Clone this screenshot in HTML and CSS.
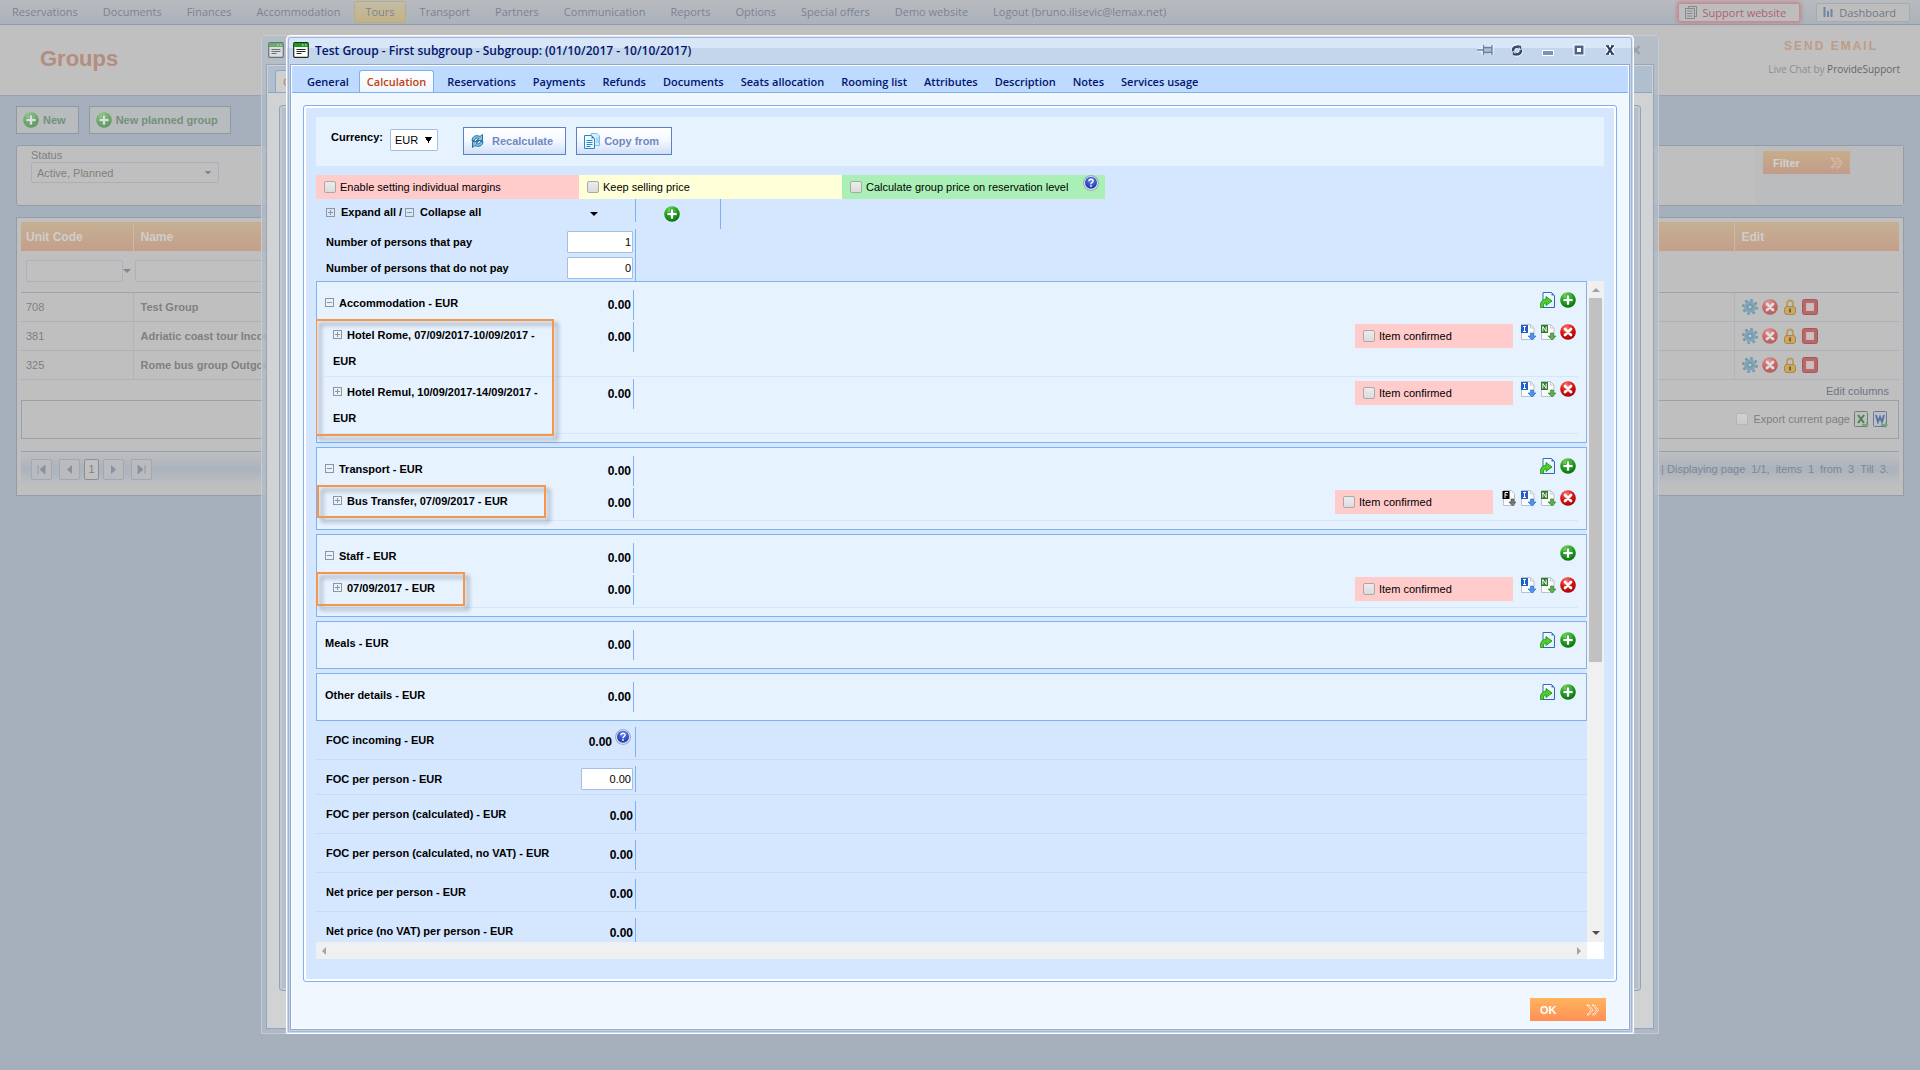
FILE: index.html
```html
<!DOCTYPE html>
<html lang="en">
<head>
<meta charset="utf-8">
<title>Groups</title>
<link rel="stylesheet" href="styles.css">
</head>
<body>
<svg class="defs" aria-hidden="true">
  <defs>
    <radialGradient id="g-green" cx="40%" cy="25%" r="80%"><stop offset="0" stop-color="#7fe05a"/><stop offset=".5" stop-color="#22a31f"/><stop offset="1" stop-color="#036b06"/></radialGradient>
    <radialGradient id="g-red" cx="40%" cy="25%" r="80%"><stop offset="0" stop-color="#ff7a70"/><stop offset=".5" stop-color="#dd1414"/><stop offset="1" stop-color="#9c0000"/></radialGradient>
    <radialGradient id="g-blue" cx="50%" cy="30%" r="70%"><stop offset="0" stop-color="#5d87f0"/><stop offset="1" stop-color="#1a2fae"/></radialGradient>
    <linearGradient id="g-page" x1="0" y1="0" x2="1" y2="1"><stop offset="0" stop-color="#ffffff"/><stop offset="1" stop-color="#dfeaf5"/></linearGradient>
    <symbol id="plus" viewBox="0 0 16 16"><circle cx="8" cy="8" r="7.8" fill="url(#g-green)"/><path d="M6.5 3h3v3.500H13v3H9.500V13h-3V9.500H3v-3h3.500z" fill="#fff" stroke="#0c7a10" stroke-width=".6"/></symbol>
    <symbol id="cross" viewBox="0 0 16 16"><circle cx="8" cy="8" r="7.800" fill="url(#g-red)"/><path d="M5 5l6 6M11 5l-6 6" stroke="#fff" stroke-width="2.800" stroke-linecap="round"/></symbol>
    <symbol id="help" viewBox="0 0 16 16"><circle cx="8" cy="8" r="7.800" fill="#8c98b4"/><circle cx="8" cy="8" r="7" fill="#dfe5f2"/><circle cx="8" cy="7.800" r="6" fill="url(#g-blue)"/><path d="M6 6.200c0-2.800 4.200-2.600 4.100-.200C10 7.500 8 7.500 8 9.200" fill="none" stroke="#fff" stroke-width="1.500"/><rect x="7.200" y="10.200" width="1.600" height="1.600" fill="#fff"/></symbol>
    <symbol id="import" viewBox="0 0 16 16"><path d="M3 .5h8.500l3 3v12H3z" fill="url(#g-page)" stroke="#2b6cb8"/><path d="M11.500.5v3h3z" fill="#2f7fd6"/><path d="M.5 15.500C0 10 2 7.500 6 7.200V4.500l6 4.500-6 4.500V11c-2 0-2.500 1-2.500 4.500z" fill="#4ccc2e" stroke="#168a12" stroke-width=".8"/></symbol>
    <symbol id="page-i" viewBox="0 0 16 16"><path d="M1.500.5h9l3.500 3.500v11.500H1.500z" fill="#fbfbfb" stroke="#b9c1ca"/><path d="M10.500.5v3.500H14" fill="none" stroke="#c4ccd5"/><rect x="1" y="1" width="7" height="8" fill="#1f5fc6"/><path d="M3 2.500h3M4.500 2.500v5M3 7.500h3" stroke="#fff" fill="none"/><path d="M10.500 9h3v3H16l-4 4-4-4h2.500z" fill="#4a93f5" stroke="#2466c2" stroke-width=".6"/></symbol>
    <symbol id="page-n" viewBox="0 0 16 16"><path d="M1.500.5h9l3.500 3.500v11.500H1.500z" fill="#fbfbfb" stroke="#b9c1ca"/><path d="M10.500.5v3.500H14" fill="none" stroke="#c4ccd5"/><rect x="1" y="1" width="7" height="8" fill="#2e7a2a"/><path d="M2.800 7.500v-5l3.400 5v-5" stroke="#fff" fill="none"/><path d="M10.500 9h3v3H16l-4 4-4-4h2.500z" fill="#59b048" stroke="#2d7d27" stroke-width=".6"/></symbol>
    <symbol id="page-f" viewBox="0 0 16 16"><path d="M3.500.5h8l3 3.500v11.500h-11z" fill="#fbfbfb" stroke="#b9c1ca"/><rect x="2.500" y="1" width="7" height="8" fill="#000"/><path d="M5 8V2.500h3M5 5h2.500" stroke="#fff" fill="none"/><path d="M11 9h3v3h2l-3.500 4L9 12h2z" fill="#777" stroke="#444" stroke-width=".6"/></symbol>
    <symbol id="expand" viewBox="0 0 9 9"><rect x=".5" y=".5" width="8" height="8" fill="none" stroke="#8f959c"/><path d="M2 4.500h5M4.500 2v5" stroke="#8f959c"/></symbol>
    <symbol id="collapse" viewBox="0 0 9 9"><rect x=".5" y=".5" width="8" height="8" fill="none" stroke="#8f959c"/><path d="M2 4.500h5" stroke="#8f959c"/></symbol>
    <symbol id="sheet" viewBox="0 0 16 16"><rect x=".7" y=".7" width="14.600" height="14.600" rx="1" fill="#fff" stroke="#222b22" stroke-width="1.200"/><rect x="1" y="1" width="14" height="4" fill="#1c9a1c"/><path d="M9 3h1.500M12 3h1.500" stroke="#fff"/><path d="M3.500 7.500h9M3.500 9.500h9M3.500 11.500h5" stroke="#222"/></symbol>
    <symbol id="chevrons" viewBox="0 0 14 12"><path d="M1 1h2l4 5-4 5H1l4-5zM6.500 1h2l4 5-4 5h-2l4-5z" fill="none" stroke="#fff" stroke-dasharray="1.500 .5"/></symbol>
    <symbol id="gear" viewBox="0 0 16 16"><circle cx="8" cy="8" r="6.800" fill="none" stroke="#6f98ac" stroke-width="2.400" stroke-dasharray="2.700 2.640"/><circle cx="8" cy="8" r="5.800" fill="#7fa5b8"/><circle cx="8" cy="8" r="2.200" fill="#bfc3c5" stroke="#5f8799"/></symbol>
    <symbol id="lock" viewBox="0 0 16 16"><path d="M5 8V4.500c0-4 6-4 6 0V8" fill="none" stroke="#b99a5c" stroke-width="1.800"/><rect x="2.500" y="7.500" width="11" height="8" rx="2.500" fill="#cda862" stroke="#a8884c"/><path d="M8 9.500v4" stroke="#7d6238" stroke-width="2"/></symbol>
    <symbol id="stop" viewBox="0 0 16 16"><rect x=".5" y=".5" width="15" height="15" rx="2" fill="#b8686b" stroke="#a2585c"/><rect x="4.500" y="4.500" width="7" height="7" fill="#c6c2c2" stroke="#d3b5b5"/></symbol>
  </defs>
</svg>

<div class="page">
  <nav class="menu">
    <a href="#">Reservations</a><a href="#">Documents</a><a href="#">Finances</a><a href="#">Accommodation</a><a href="#" class="current">Tours</a><a href="#">Transport</a><a href="#">Partners</a><a href="#">Communication</a><a href="#">Reports</a><a href="#">Options</a><a href="#">Special offers</a><a href="#">Demo website</a><a href="#">Logout (bruno.ilisevic@lemax.net)</a>
    <div class="menu-buttons">
      <button class="support"><svg width="12" height="13" viewBox="0 0 12 13"><path d="M3.500 2.500V.5h8v10h-2M.5 2.500h9v10h-9zM2 5h5.500M2 7.500h5.500M2 10h5.500" fill="none" stroke="#85878a"/></svg>Support website</button>
      <button class="dashboard"><svg width="10" height="10" viewBox="0 0 10 10"><path d="M1.500 0v10M5 4v6M8.500 2v8" stroke="#6f86a5" stroke-width="2"/></svg>Dashboard</button>
    </div>
  </nav>
  <header class="head">
    <h1>Groups</h1>
    <div class="contact"><a href="#" class="send">SEND EMAIL</a><span class="chat">Live Chat by <a href="#">ProvideSupport</a></span></div>
  </header>
  <main class="content">
    <div class="new-buttons">
      <button><svg width="16" height="16"><use href="#plus"/></svg>New</button>
      <button><svg width="16" height="16"><use href="#plus"/></svg>New planned group</button>
    </div>
    <section class="filter">
      <div class="status"><label for="status">Status</label><select id="status"><option>Active, Planned</option></select></div>
      <div class="filter-side"><button class="orange">Filter<svg width="14" height="12"><use href="#chevrons"/></svg></button></div>
    </section>
    <section class="grid-panel">
      <table class="groups">
        <colgroup><col class="c-code"><col><col class="c-edit"></colgroup>
        <thead>
          <tr><th>Unit Code</th><th>Name</th><th>Edit</th></tr>
          <tr class="filters"><td><div class="combo"><input aria-label="Unit code filter"><i class="caret"></i></div></td><td><input class="name-filter" aria-label="Name filter"></td><td></td></tr>
        </thead>
        <tbody>
          <tr><td>708</td><td class="name">Test Group</td><td><div class="row-icons"><svg><use href="#gear"/></svg><svg class="dim"><use href="#cross"/></svg><svg><use href="#lock"/></svg><svg><use href="#stop"/></svg></div></td></tr>
          <tr><td>381</td><td class="name">Adriatic coast tour Incoming</td><td><div class="row-icons"><svg><use href="#gear"/></svg><svg class="dim"><use href="#cross"/></svg><svg><use href="#lock"/></svg><svg><use href="#stop"/></svg></div></td></tr>
          <tr><td>325</td><td class="name">Rome bus group Outgoing</td><td><div class="row-icons"><svg><use href="#gear"/></svg><svg class="dim"><use href="#cross"/></svg><svg><use href="#lock"/></svg><svg><use href="#stop"/></svg></div></td></tr>
        </tbody>
      </table>
      <a href="#" class="edit-columns">Edit columns</a>
      <div class="export">
        <label><input type="checkbox">Export current page</label>
        <svg width="15" height="17" viewBox="0 0 15 17"><rect x=".5" y=".5" width="13" height="15" rx="1" fill="#b9c2b9" stroke="#6f7f75"/><path d="M4 4l6 8M10 4l-6 8" stroke="#4f7d58" stroke-width="2"/><path d="M8 13h4v-2l3 3-3 3v-2H8z" fill="#72a877"/></svg>
        <svg width="15" height="17" viewBox="0 0 15 17"><rect x=".5" y=".5" width="13" height="15" rx="1" fill="#b9c0c9" stroke="#6f7a8a"/><path d="M3 4l2 7 2-5 2 5 2-7" stroke="#5570a0" stroke-width="1.800" fill="none"/><path d="M8 13h4v-2l3 3-3 3v-2H8z" fill="#72a877"/></svg>
      </div>
      <div class="pager">
        <button class="first" aria-label="First page"><svg width="9" height="9" viewBox="0 0 9 9"><path d="M1 0v9M8 0v9L3 4.500z" fill="#8891a0" stroke="#8891a0" stroke-width=".8"/></svg></button>
        <button aria-label="Previous page"><svg width="9" height="9" viewBox="0 0 9 9"><path d="M7 0v9L2 4.500z" fill="#8891a0"/></svg></button>
        <button class="num">1</button>
        <button aria-label="Next page"><svg width="9" height="9" viewBox="0 0 9 9"><path d="M2 0v9l5-4.500z" fill="#8891a0"/></svg></button>
        <button class="last" aria-label="Last page"><svg width="9" height="9" viewBox="0 0 9 9"><path d="M1 0v9l5-4.500zM8 0v9" fill="#8891a0" stroke="#8891a0" stroke-width=".8"/></svg></button>
        <p class="pager-info"><span>| Displaying page</span><span>1/1,</span><span>items</span><span>1</span><span>from</span><span>3</span><span>Till</span><span>3.</span></p>
      </div>
    </section>
  </main>
</div>

<div class="window back" aria-hidden="true">
  <div class="title-bar"><svg width="16" height="16"><use href="#sheet"/></svg><span class="back-x"><svg width="10" height="10" viewBox="0 0 10 10"><path d="M1.500 1l7 8M8.500 1l-7 8" stroke="#7d8288" stroke-width="2"/></svg></span></div>
  <div class="window-body"><div class="tabs"><span class="tab selected">General</span></div><div class="panel"></div></div>
</div>

<div class="window front" role="dialog" aria-labelledby="win-title">
  <div class="title-bar">
    <svg width="16" height="16"><use href="#sheet"/></svg>
    <h2 id="win-title">Test Group - First subgroup - Subgroup: (01/10/2017 - 10/10/2017)</h2>
    <div class="win-buttons">
      <button aria-label="Pin"><svg width="17" height="12" viewBox="0 0 17 12"><path d="M0 6h6M6 1v10M6 3.500c3 1 5 1 9 0M6 8.500c3-1 5-1 9 0M15 1v10" fill="none" stroke="#fff" stroke-width="3"/><path d="M6 3.500h9v5H6z" fill="#a9bcd8"/><path d="M0 6h6M6.500 1v10M7 3.500h8M7 8.500h8M15 1v10" fill="none" stroke="#6680a8" stroke-width="1.400"/></svg></button>
      <button aria-label="Reload"><svg width="12" height="11" viewBox="0 0 13 12"><path d="M2.500 6a4 4 0 0 1 6-3.500M10.500 6a4 4 0 0 1-6 3.500" stroke="#fff" stroke-width="5" fill="none"/><path d="M2.500 6.500a4 3.500 0 0 1 6-4M10.500 5.500a4 3.500 0 0 1-6 4" fill="none" stroke="#38496b" stroke-width="2.800"/><path d="M6.500 0L11 1v4zM6.500 12L2 11V7z" fill="#38496b"/></svg></button>
      <button aria-label="Minimize"><svg width="12" height="12" viewBox="0 0 12 12"><rect x=".5" y="6.500" width="11" height="5" fill="#7b92b8" stroke="#fff"/></svg></button>
      <button aria-label="Maximize"><svg width="12" height="12" viewBox="0 0 12 12"><rect x="1" y="1" width="10" height="10" fill="#4d638c" stroke="#fff"/><rect x="4" y="4" width="4" height="4" fill="#fff"/></svg></button>
      <button aria-label="Close"><svg width="12" height="12" viewBox="0 0 12 12"><path d="M3 1.500l6 9M9 1.500l-6 9" stroke="#fff" stroke-width="4.500"/><path d="M3.500 2l5 8M8.500 2l-5 8" stroke="#2c3d5e" stroke-width="2.200"/><path d="M2 2h3M7 2h3M2 10h3M7 10h3" stroke="#2c3d5e" stroke-width="1.400"/></svg></button>
    </div>
  </div>
  <div class="window-body">
    <nav class="tabs">
      <a href="#" class="tab">General</a><a href="#" class="tab selected">Calculation</a><a href="#" class="tab">Reservations</a><a href="#" class="tab">Payments</a><a href="#" class="tab">Refunds</a><a href="#" class="tab">Documents</a><a href="#" class="tab">Seats allocation</a><a href="#" class="tab">Rooming list</a><a href="#" class="tab">Attributes</a><a href="#" class="tab">Description</a><a href="#" class="tab">Notes</a><a href="#" class="tab">Services usage</a>
    </nav>
    <div class="panel">
      <div class="toolbar">
        <label for="currency">Currency:</label>
        <select id="currency"><option>EUR</option></select>
        <button class="tool recalc"><svg width="13" height="14" viewBox="0 0 13 14"><path d="M1 6.500C1 2 6 .5 9 2.500L11.500.5v6h-6L8 4.500c-2-1.200-4.500 0-4.500 2zM12 7.500c0 4.500-5 6-8 4L1.500 13.500v-6h6L5 9.500c2 1.200 4.500 0 4.500-2z" fill="#7cc0ee" stroke="#1d6290" stroke-width=".9"/></svg>Recalculate</button>
        <button class="tool copy"><svg width="16" height="16" viewBox="0 0 16 16"><path d="M7 .5h6l2.500 2.500v9.500H7z" fill="#d8eefb" stroke="#7cc0ea"/><path d="M12 5h3M12 7h3M12 9h3" stroke="#7cc0ea"/><path d="M.5 2.500h7l3 3v10H.5z" fill="#eef8ff" stroke="#2a84cc"/><path d="M7.500 2.500v3h3z" fill="#2a84cc"/><path d="M2.500 7.500h6M2.500 9.500h6M2.500 11.500h6M2.500 13.500h4" stroke="#2a84cc"/></svg>Copy from</button>
      </div>
      <div class="options">
        <label class="option pink"><input type="checkbox">Enable setting individual margins</label>
        <label class="option yellow"><input type="checkbox">Keep selling price</label>
        <div class="option green"><label><input type="checkbox">Calculate group price on reservation level</label><svg width="16" height="16"><use href="#help"/></svg></div>
      </div>
      <div class="persons">
        <div class="expand-row">
          <p><svg width="9" height="9"><use href="#expand"/></svg><a href="#">Expand all</a><span>/</span><svg width="9" height="9"><use href="#collapse"/></svg><a href="#">Collapse all</a></p>
          <div class="menu-cell"><i class="caret black"></i></div>
          <div class="add-cell"><svg width="16" height="16"><use href="#plus"/></svg></div>
        </div>
        <div class="person-row"><label for="pay">Number of persons that pay</label><div class="person-value"><input id="pay" value="1"></div></div>
        <div class="person-row"><label for="nopay">Number of persons that do not pay</label><div class="person-value"><input id="nopay" value="0"></div></div>
      </div>

      <div class="scroller">
        <div class="list">
          <section class="group">
            <div class="row"><div class="label"><svg width="9" height="9"><use href="#collapse"/></svg>Accommodation - EUR</div><div class="value">0.00</div><div class="actions"><svg><use href="#import"/></svg><svg><use href="#plus"/></svg></div></div>
            <div class="children marked mark-two">
              <div class="row child"><div class="label"><svg width="9" height="9"><use href="#expand"/></svg>Hotel Rome, 07/09/2017-10/09/2017 - EUR</div><div class="value">0.00</div><div class="actions"><label class="confirm"><input type="checkbox">Item confirmed</label><svg><use href="#page-i"/></svg><svg><use href="#page-n"/></svg><svg><use href="#cross"/></svg></div></div>
              <div class="row child"><div class="label"><svg width="9" height="9"><use href="#expand"/></svg>Hotel Remul, 10/09/2017-14/09/2017 - EUR</div><div class="value">0.00</div><div class="actions"><label class="confirm"><input type="checkbox">Item confirmed</label><svg><use href="#page-i"/></svg><svg><use href="#page-n"/></svg><svg><use href="#cross"/></svg></div></div>
            </div>
          </section>
          <section class="group">
            <div class="row"><div class="label"><svg width="9" height="9"><use href="#collapse"/></svg>Transport - EUR</div><div class="value">0.00</div><div class="actions"><svg><use href="#import"/></svg><svg><use href="#plus"/></svg></div></div>
            <div class="children marked mark-bus">
              <div class="row child"><div class="label"><svg width="9" height="9"><use href="#expand"/></svg>Bus Transfer, 07/09/2017 - EUR</div><div class="value">0.00</div><div class="actions"><label class="confirm"><input type="checkbox">Item confirmed</label><svg><use href="#page-f"/></svg><svg><use href="#page-i"/></svg><svg><use href="#page-n"/></svg><svg><use href="#cross"/></svg></div></div>
            </div>
          </section>
          <section class="group">
            <div class="row"><div class="label"><svg width="9" height="9"><use href="#collapse"/></svg>Staff - EUR</div><div class="value">0.00</div><div class="actions"><svg><use href="#plus"/></svg></div></div>
            <div class="children marked mark-staff">
              <div class="row child"><div class="label"><svg width="9" height="9"><use href="#expand"/></svg>07/09/2017 - EUR</div><div class="value">0.00</div><div class="actions"><label class="confirm"><input type="checkbox">Item confirmed</label><svg><use href="#page-i"/></svg><svg><use href="#page-n"/></svg><svg><use href="#cross"/></svg></div></div>
            </div>
          </section>
          <section class="group">
            <div class="row"><div class="label">Meals - EUR</div><div class="value">0.00</div><div class="actions"><svg><use href="#import"/></svg><svg><use href="#plus"/></svg></div></div>
          </section>
          <section class="group">
            <div class="row"><div class="label">Other details - EUR</div><div class="value">0.00</div><div class="actions"><svg><use href="#import"/></svg><svg><use href="#plus"/></svg></div></div>
          </section>
          <div class="sum"><div class="label">FOC incoming - EUR</div><div class="value">0.00<svg width="16" height="16"><use href="#help"/></svg></div></div>
          <div class="sum"><label class="label" for="foc">FOC per person - EUR</label><div class="value edit"><input id="foc" value="0.00"></div></div>
          <div class="sum"><div class="label">FOC per person (calculated) - EUR</div><div class="value">0.00</div></div>
          <div class="sum"><div class="label">FOC per person (calculated, no VAT) - EUR</div><div class="value">0.00</div></div>
          <div class="sum"><div class="label">Net price per person - EUR</div><div class="value">0.00</div></div>
          <div class="sum"><div class="label">Net price (no VAT) per person - EUR</div><div class="value">0.00</div></div>
        </div>
        <div class="vbar" aria-hidden="true"><i class="arrow up"></i><div class="track"><div class="thumb"></div></div><i class="arrow down"></i></div>
        <div class="hbar" aria-hidden="true"><i class="arrow left"></i><i class="arrow right"></i></div>
      </div>
    </div>
    <div class="footer"><button class="orange ok">OK<svg width="14" height="12"><use href="#chevrons"/></svg></button></div>
  </div>
</div>
</body>
</html>
```
FILE: styles.css
```css
*, *::before, *::after { box-sizing: border-box; }
html, body { height: 100%; margin: 0; }
body {
  position: relative;
  overflow: hidden;
  background: #a6b0bd;
  font: 11px "Liberation Sans", Arial, sans-serif;
  color: #000;
}
a { color: inherit; text-decoration: none; }
button, input, select { font: inherit; color: inherit; margin: 0; }
h1, h2, p { margin: 0; }
svg { display: block; flex: none; overflow: visible; }
.defs { position: absolute; width: 0; height: 0; }

input[type="checkbox"] {
  appearance: none;
  flex: none;
  width: 12px;
  height: 12px;
  border: 1px solid #a9a9a9;
  border-radius: 2px;
  background: linear-gradient(#ececec, #dcdcdc);
}
.caret {
  border: 4px solid transparent;
  border-top-color: #7e8794;
  border-bottom: 0;
}
.caret.black { border-top-color: #000; }

/* Page behind the windows */
.page { color: #808080; }
.menu {
  display: flex;
  align-items: center;
  height: 25px;
  padding: 0 10px 0 0;
  border-bottom: 1px solid #8f9cad;
  background: linear-gradient(#b8bbbf, #abb2bb);
  font: 11px "Open Sans", sans-serif;
  color: #7e8290;
}
.menu a { padding: 0 13px 0 12px; line-height: 20px; white-space: nowrap; }
.menu .current {
  margin: 0 2px 0 1px;
  padding: 0 10px;
  border: 1px solid #b5ab8e;
  border-radius: 2px;
  background: linear-gradient(#c4bda5, #c2b385);
}
.menu-buttons { display: flex; gap: 16px; margin-left: auto; }
.menu button {
  display: flex;
  align-items: center;
  gap: 6px;
  height: 19px;
  padding: 0 13px 0 6px;
  border: 1px solid #a6abb0;
  border-radius: 2px;
  background: #bdbdbd;
  color: #6f7a88;
}
.menu .support { color: #b2606f; border-color: #c58d92; box-shadow: 0 0 4px 1px #c0838a; }
.head {
  display: flex;
  justify-content: space-between;
  height: 71px;
  padding: 0 20px 0 40px;
  border-bottom: 1px solid #98a2af;
  background: #c0c0c0;
}
.head h1 { font-size: 22px; line-height: 68px; color: #b38d7f; }
.contact { display: flex; flex-direction: column; align-items: flex-end; padding-top: 12px; }
.send { padding-right: 22px; font-weight: bold; font-size: 12px; line-height: 18px; letter-spacing: 2px; color: #bf9c86; }
.chat { font: 10px/28px "Open Sans", sans-serif; color: #8e8e8e; }
.chat a { color: #666; }
.content { padding: 10px 16px; }
.new-buttons { display: flex; gap: 10px; }
.new-buttons button {
  display: flex;
  align-items: center;
  gap: 4px;
  height: 28px;
  padding: 0 12px 0 6px;
  border: 1px solid #8f98a3;
  background: #b9bcbf;
  font-weight: bold;
  color: #71917a;
}
.new-buttons svg, .dim { opacity: .5; }
.filter {
  display: flex;
  justify-content: space-between;
  height: 61px;
  margin-top: 11px;
  border: 1px solid #939da9;
  border-radius: 3px;
  background: #bfbfbf;
}
.status { display: flex; flex-direction: column; padding: 2px 14px; }
.status label { line-height: 14px; }
.status select {
  appearance: none;
  width: 188px;
  height: 21px;
  padding: 0 5px;
  border: 1px solid #aab0b8;
  border-radius: 2px;
  background:
    linear-gradient(135deg, #7e8794 50%, transparent 50%) 176px 8px / 3px 4px no-repeat,
    linear-gradient(225deg, #7e8794 50%, transparent 50%) 173px 8px / 3px 4px no-repeat,
    #bfbfbf;
}
.filter-side { width: 148px; padding: 5px 8px; background: #bbbcbe; }
.orange {
  display: flex;
  align-items: center;
  justify-content: space-between;
  width: 87px;
  height: 23px;
  padding: 0 6px 0 10px;
  border: 0;
  background: linear-gradient(#c7ad89, #c29c8b);
  font-weight: bold;
  color: #d2d2d2;
}
.filter-side svg { opacity: .4; }
.grid-panel {
  height: 279px;
  margin-top: 11px;
  padding: 4px;
  border: 1px solid #939da9;
  background: #bfbfbf;
}
.groups { width: 100%; table-layout: fixed; border-collapse: collapse; }
.c-code { width: 112px; }
.c-edit { width: 165px; }
.groups th {
  height: 29px;
  padding: 0 7px 0 5px;
  text-align: left;
  font-size: 12px;
  color: #d0cdca;
  border-left: 1px solid #c8bbb0;
}
.groups th:first-child, .groups td:first-child { border-left: 0; }
.groups thead tr:first-child { background: linear-gradient(#c6b092, #c39f8b); }
.groups td { height: 29px; padding: 0 7px 0 5px; border-bottom: 1px solid #adb0b4; border-left: 1px solid #b2b4b6; }
.groups th + th, .groups tbody td + td { padding-left: 7px; }
.groups .filters td { height: 41px; padding: 0 2px 0 5px; border-left: 0; border-bottom-color: #a0a4a9; }
.groups .filters td + td { padding-left: 2px; }
.groups input { width: 97px; height: 22px; border: 1px solid #aeb2b8; border-radius: 2px; background: #c0c0c0; }
.groups .name-filter { width: 240px; }
.combo { display: flex; align-items: center; }
.name { font-weight: bold; }
.row-icons { display: flex; gap: 4px; }
.row-icons svg { width: 16px; height: 16px; }
.edit-columns { display: block; padding-right: 10px; text-align: right; line-height: 17px; margin-top: 3px; color: #6d7683; }
.export {
  display: flex;
  align-items: center;
  justify-content: flex-end;
  gap: 4px;
  height: 39px;
  padding-right: 10px;
  border: 1px solid #9aa0a8;
}
.export label { display: flex; align-items: center; gap: 5px; }
.export input { opacity: .4; }
.pager {
  display: flex;
  align-items: center;
  gap: 4px;
  height: 36px;
  margin-top: 12px;
  padding: 0 10px;
  border-top: 1px solid #93a0b0;
  background: linear-gradient(#bdbebf, #acb3bd 50%, #bfbfbf 95%);
}
.pager button { display: grid; place-items: center; width: 21px; height: 21px; padding: 0; border: 1px solid #a2a8b0; border-radius: 2px; background: #b9bbbe; }
.pager .num { width: 15px; border-color: #8a9099; background: #c0c0c0; }
.pager .first { margin-right: 3px; }
.pager .last { margin-left: 3px; }
.pager-info { display: flex; gap: 6px; margin-left: auto; color: #7e8794; }

/* Windows */
.window {
  position: absolute;
  display: flex;
  flex-direction: column;
  top: 35px;
  bottom: 36px;
  border-radius: 4px 4px 0 0;
}
.back {
  left: 261px;
  right: 261px;
  padding: 0 4px 4px;
  border: 1px solid #c5cbd3;
  background: rgba(178, 187, 199, .8);
}
.front {
  left: 286px;
  right: 286px;
  padding: 0 2px 2px;
  border: 1px solid #fff;
  outline: 1px solid #a5b7d3;
  outline-offset: -3px;
  background: linear-gradient(#d8e6f7 12px, #c3d6ec 12px, #c3d6ec);
}
.title-bar { display: flex; align-items: center; height: 28px; flex: none; padding: 0 13px 0 4px; }
.back .title-bar { padding-left: 2px; justify-content: space-between; }
.back .title-bar svg { opacity: .5; }
.title-bar h2 { margin-left: 6px; font: 600 12px "Open Sans", sans-serif; color: #00156e; white-space: nowrap; }
.win-buttons { display: flex; gap: 14px; margin-left: auto; }
.win-buttons button { display: grid; place-items: center; width: 17px; height: 14px; padding: 0; border: 0; background: none; }
.window-body { display: flex; flex-direction: column; flex: 1; min-height: 0; border: 1px solid #8fa8cc; background: #f0f7ff; }
.front .window-body { margin: 0 1px 1px; box-shadow: inset 0 0 0 1px #fff; padding: 1px; }
.back .window-body { background: #d0d2d4; border-color: #97a4b5; padding: 1px; }
.tabs { display: flex; align-items: flex-end; flex: none; height: 27px; padding-left: 6px; border-bottom: 1px solid #7fb0ee; background: #bedaff; }
.tab { padding: 0 8px 0 9px; font: 600 11px/21px "Open Sans", sans-serif; color: #00156e; white-space: nowrap; }
.tab.selected { padding: 0 7px; margin: 0 4px 0 2px; border: 1px solid #7fb0ee; border-bottom: 0; border-radius: 3px 3px 0 0; background: linear-gradient(#fff, #eef5ff); color: #c0440c; }
.back .tabs { background: #b0bfd0; border-color: #8ea5c2; }
.back .tab.selected { margin-left: 1px; background: #cdcfd1; border-color: #8ea5c2; color: #b98b78; }
.panel {
  display: flex;
  flex-direction: column;
  flex: 1;
  min-height: 0;
  margin: 12px 11px 0;
  padding: 11px 12px 22px;
  border: 1px solid #7fb1f5;
  border-radius: 3px;
  box-shadow: inset 0 0 0 2px #fff;
  background: #d5e7ff;
}
.back .panel { margin-bottom: 36px; background: #b5bfca; border-color: #8ea5c2; box-shadow: inset 0 0 0 2px #c6c9cc; }

.toolbar { display: flex; flex: none; height: 49px; padding: 10px 15px; background: #e7f2ff; font-weight: bold; }
.toolbar label { line-height: 20px; }
.toolbar select {
  appearance: none;
  width: 48px;
  height: 22px;
  margin: 2px 25px 0 7px;
  padding: 0 4px;
  border: 1px solid #a3bfe5;
  border-radius: 1px;
  font-weight: normal;
  background:
    linear-gradient(to top right, transparent 50%, #000 51%) 34px 7px / 4px 7px no-repeat,
    linear-gradient(to top left, transparent 50%, #000 51%) 37px 7px / 4px 7px no-repeat,
    #fff;
}
.tool {
  display: flex;
  align-items: center;
  gap: 8px;
  height: 28px;
  padding: 0 12px 0 7px;
  border: 1px solid #5b82c2;
  background: linear-gradient(#fff, #f4f8ff 50%, #cfdff8);
  font-weight: bold;
  color: #7088c0;
}
.toolbar .recalc { margin-right: 10px; }
.toolbar .copy { gap: 4px; }
.options { display: flex; flex: none; margin-top: 9px; }
.option { display: flex; align-items: center; gap: 4px; width: 263px; height: 24px; padding: 0 6px 0 8px; }
.option label { display: flex; align-items: center; gap: 4px; margin-right: auto; }
.option > svg { margin-bottom: 8px; }
.pink { background: #ffcbcb; }
.yellow { background: #ffffd8; }
.green { background: #aaf0b6; }

.persons { display: flex; flex-direction: column; flex: none; font-weight: bold; }
.expand-row { display: flex; height: 30px; }
.expand-row p { display: flex; align-items: center; gap: 6px; width: 254px; height: 26px; padding-left: 10px; }
.expand-row span { margin: 0 -3px; }
.menu-cell { width: 66px; height: 23px; padding: 13px 0 0 20px; border-right: 1px solid #7fb1f5; }
.add-cell { width: 85px; padding: 7px 0 0 28px; border-right: 1px solid #7fb1f5; }
.menu-cell .caret { display: block; width: 8px; }
.person-row { display: flex; height: 26px; padding-left: 10px; }
.person-row label { width: 241px; line-height: 26px; }
.person-value { width: 69px; padding-top: 2px; border-right: 1px solid #7fb1f5; }
.person-value input { width: 66px; height: 22px; }
.person-value input, .edit input { display: block; padding: 0 1px; border: 1px solid #a3bfe5; border-radius: 1px; background: #fff; text-align: right; font-weight: normal; }

.scroller { display: grid; grid-template: minmax(0, 1fr) 17px / minmax(0, 1fr) 17px; flex: 1; min-height: 0; background: #fff; }
.list { overflow: hidden; background: #d5e7ff; font-weight: bold; }
.group { padding: 8px; border: 1px solid #7fb1f5; background: #e7f2ff; }
.group + .group { margin-top: 4px; }
.row { display: flex; }
.label { width: 232px; line-height: 26px; }
.label svg { display: inline-block; margin: 0 5px 0 0; vertical-align: 0; }
.value { display: flex; justify-content: flex-end; width: 77px; height: 30px; padding-right: 2px; border-right: 1px solid #7fb1f5; font-size: 12px; line-height: 30px; }
.actions { display: flex; gap: 4px; margin: 2px 2px 0 auto; }
.actions > svg { width: 16px; height: 16px; }
.children { position: relative; }
.child { margin-top: 2px; padding-bottom: 2px; border-bottom: 1px solid #d3e6fc; }
.child .label { padding-left: 8px; }
.confirm { display: flex; align-items: center; gap: 4px; width: 158px; height: 24px; margin-right: 3px; padding: 0 8px; background: #ffcbcb; font-weight: normal; }
/* Highlight frames laid over the rows */
.marked::after {
  content: "";
  position: absolute;
  top: -3px;
  left: -10px;
  width: 239px;
  height: 117px;
  border: 2px solid #f79646;
  filter: drop-shadow(4px 4px 2px rgba(70, 80, 95, .55));
  pointer-events: none;
}
.mark-bus::after { left: -8px; width: 229px; height: 33px; }
.mark-staff::after { left: -9px; width: 149px; height: 34px; }

.sum { display: flex; padding: 6px 0 2px 10px; border-bottom: 1px solid #c5dbf8; }
.sum .label { width: 240px; }
.sum .value { width: 70px; }
.sum .value svg { margin: 2px 2px 0 3px; }
.sum .edit { height: 26px; padding: 2px 2px 0 0; font-size: 11px; line-height: normal; }
.edit input { width: 52px; height: 22px; }

.vbar { display: flex; flex-direction: column; align-items: center; background: #f0f0f0; }
.track { flex: 1; width: 13px; margin: 6px 0; }
.thumb { height: 58%; background: #c1c1c1; }
.hbar { display: flex; align-items: center; justify-content: space-between; padding: 0 6px; background: #f0f0f0; }
.arrow { border: 4px solid transparent; }
.up { margin-top: 7px; border-top: 0; border-bottom-color: #a3a3a3; }
.down { margin-bottom: 7px; border-bottom: 0; border-top-color: #505050; }
.left { border-left: 0; border-right-color: #a3a3a3; }
.right { border-right: 0; border-left-color: #a3a3a3; }

.footer { display: flex; justify-content: flex-end; flex: none; height: 46px; padding: 16px 22px 0 0; }
.ok { width: 76px; background: linear-gradient(#ffb35c, #ff9056); color: #fff; }
```
